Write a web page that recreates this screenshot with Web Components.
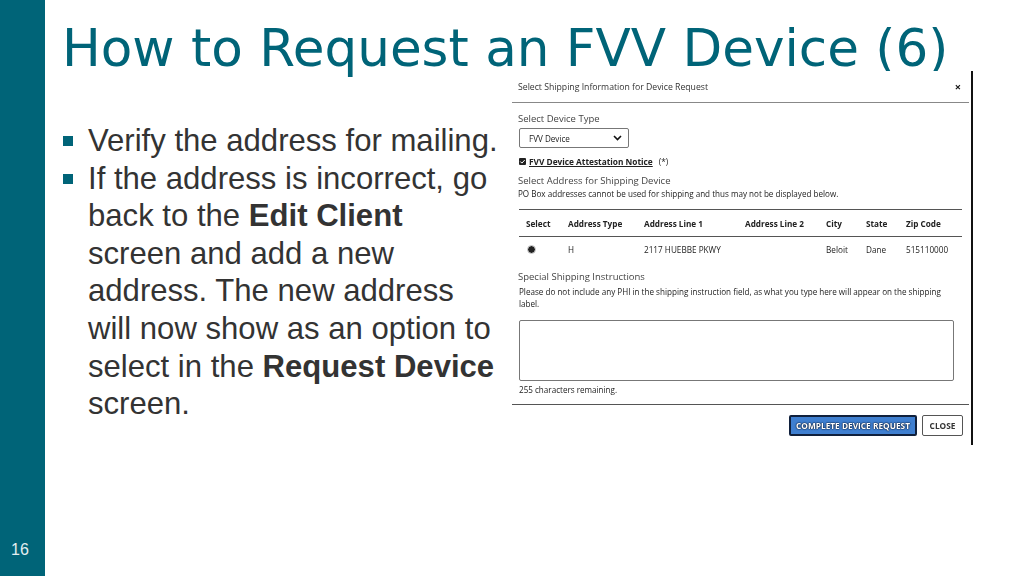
<!DOCTYPE html>
<html>
<head>
<meta charset="utf-8">
<title>How to Request an FVV Device (6)</title>
<style>
  html, body { margin: 0; padding: 0; background: #fff; }
</style>
</head>
<body>
<slide-frame number="16">
  <slide-title slot="title">How to Request an FVV Device (6)</slide-title>
  <bullet-list slot="body">
    <bullet-item>Verify the address for mailing.</bullet-item>
    <bullet-item>If the address is incorrect, go back to the <b>Edit Client</b> screen and add a new address. The new address will now show as an option to select in the <b>Request Device</b> screen.</bullet-item>
  </bullet-list>
  <device-dialog slot="aside"></device-dialog>
</slide-frame>

<script>
class SlideFrame extends HTMLElement {
    constructor() {
        super();
        const shadow = this.attachShadow({ mode: 'open' });
        shadow.innerHTML = /*html*/`
        <style>
            :host {
                display: flex;
                width: 1024px;
                height: 576px;
                overflow: hidden;
                background: #fff;
            }
            .side {
                width: 45px;
                flex: none;
                background: #006478;
                color: #e4eef0;
                display: flex;
                align-items: flex-end;
                font: 16px "Liberation Sans", Arial, sans-serif;
                padding: 0 0 17px 11px;
                box-sizing: border-box;
            }
            .main {
                flex: 1;
                display: flex;
                flex-direction: column;
                min-width: 0;
            }
            .content {
                display: flex;
                align-items: flex-start;
                margin-top: -5px;
            }
        </style>
        <div class="side">${this.getAttribute('number')}</div>
        <div class="main">
            <slot name="title"></slot>
            <div class="content">
                <slot name="body"></slot>
                <slot name="aside"></slot>
            </div>
        </div>
        `;
    }
}

class SlideTitle extends HTMLElement {
    constructor() {
        super();
        const shadow = this.attachShadow({ mode: 'open' });
        shadow.innerHTML = /*html*/`
        <style>
            :host {
                display: block;
                height: 76px;
                padding: 17px 0 0 17px;
                box-sizing: border-box;
                color: #006478;
                font: 51.6px/62px "DejaVu Sans", Verdana, sans-serif;
                white-space: nowrap;
            }
        </style>
        <slot></slot>
        `;
    }
}

class BulletList extends HTMLElement {
    constructor() {
        super();
        const shadow = this.attachShadow({ mode: 'open' });
        shadow.innerHTML = /*html*/`
        <style>
            :host {
                display: block;
                width: 467px;
                flex: none;
                padding: 51px 12px 0 18px;
                box-sizing: border-box;
            }
        </style>
        <slot></slot>
        `;
    }
}

class BulletItem extends HTMLElement {
    constructor() {
        super();
        const shadow = this.attachShadow({ mode: 'open' });
        shadow.innerHTML = /*html*/`
        <style>
            :host {
                display: flex;
                color: #333;
                font: 31.1px/37.6px "Liberation Sans", Arial, sans-serif;
            }
            .mark {
                width: 10px;
                height: 10px;
                flex: none;
                margin: 14px 15px 0 0;
                background: #006478;
            }
            .text { flex: 1; min-width: 0; }
        </style>
        <span class="mark"></span>
        <span class="text"><slot></slot></span>
        `;
    }
}

class AddressTable extends HTMLElement {
    constructor() {
        super();
        const shadow = this.attachShadow({ mode: 'open' });
        shadow.innerHTML = /*html*/`
        <style>
            :host {
                display: block;
                margin: 9px 0 0 7px;
                width: 443px;
                border-top: 1px solid #555;
                font-size: 8.2px;
                color: #222;
            }
            .row {
                display: grid;
                grid-template-columns: 42px 76px 101px 81px 40px 40px 1fr;
                align-items: center;
                padding-left: 7px;
            }
            .head {
                height: 26px;
                font-weight: 700;
                border-bottom: 1px solid #555;
            }
            .body { height: 26px; padding-bottom: 1px; box-sizing: border-box; }
            .radio {
                width: 7px;
                height: 7px;
                box-sizing: border-box;
                border-radius: 50%;
                margin-left: 2px;
                background: #222;
                outline: 1px solid #bbb;
                outline-offset: -0.5px;
            }
        </style>
        <div class="row head">
            <span>Select</span><span>Address Type</span><span>Address Line 1</span>
            <span>Address Line 2</span><span>City</span><span>State</span><span>Zip Code</span>
        </div>
        <div class="row body">
            <span class="radio"></span><span>H</span><span>2117 HUEBBE PKWY</span>
            <span></span><span>Beloit</span><span>Dane</span><span>515110000</span>
        </div>
        `;
    }
}

class DeviceDialog extends HTMLElement {
    constructor() {
        super();
        const shadow = this.attachShadow({ mode: 'open' });
        shadow.innerHTML = /*html*/`
        <style>
            :host {
                display: block;
                width: 461px;
                height: 374px;
                box-sizing: border-box;
                flex: none;
                background: #fff;
                border-right: 2px solid #111;
                font-family: "Open Sans", "Noto Sans", sans-serif;
                color: #222;
                filter: blur(0.3px);
            }
            .head {
                display: flex;
                justify-content: space-between;
                align-items: center;
                height: 31px;
                margin-right: 2px;
                padding: 0 8px 0 6px;
                border-bottom: 1px solid #888;
                font-size: 8.7px;
                color: #333;
            }
            .x { font-size: 11px; font-weight: 700; color: #111; }
            .label { font-size: 9.5px; line-height: 13px; color: #444; margin-left: 6px; }
            .note { font-size: 8.1px; line-height: 12px; color: #222; margin-left: 7px; }
            .select {
                display: flex;
                align-items: center;
                justify-content: space-between;
                box-sizing: border-box;
                width: 110px;
                height: 20px;
                margin: 3px 0 0 7px;
                padding: 0 6px 0 9px;
                border: 1px solid #777;
                border-radius: 2px;
                font-size: 8.1px;
            }
            .notice {
                display: flex;
                align-items: center;
                gap: 3px;
                margin: 6px 0 0 7px;
                height: 14px;
                font-size: 8.3px;
            }
            .check {
                width: 7px;
                height: 7px;
                background: #222;
                border-radius: 1px;
                display: flex;
            }
            .notice b { text-decoration: underline; }
            .notice i { font-style: normal; margin-left: 3px; }
            .area {
                box-sizing: border-box;
                width: 435px;
                height: 61px;
                margin: 10px 0 0 7px;
                border: 1px solid #777;
                border-radius: 2px;
            }
            .foot {
                display: flex;
                justify-content: flex-end;
                gap: 5px;
                margin: 8px 2px 0 0;
                padding: 10px 6px 0 0;
                border-top: 1px solid #555;
            }
            .btn {
                box-sizing: border-box;
                height: 21px;
                display: flex;
                align-items: center;
                justify-content: center;
                font-size: 8.3px;
                font-weight: 700;
                border-radius: 2px;
            }
            .primary {
                width: 128px;
                background: #3f7fd0;
                border: 2px solid #10203c;
                color: #fff;
                text-shadow: 0 0 1.5px #10203c, 0 0 1.5px #10203c, 0 0 1px #10203c;
            }
            .plain { width: 41px; border: 1px solid #555; color: #333; }
        </style>
        <div class="head">
            <span>Select Shipping Information for Device Request</span>
            <span class="x">×</span>
        </div>
        <div class="label" style="margin-top:9px">Select Device Type</div>
        <div class="select">
            <span>FVV Device</span>
            <svg width="9" height="6" viewBox="0 0 9 6"><path d="M1 1l3.5 3.5L8 1" fill="none" stroke="#111" stroke-width="1.6"/></svg>
        </div>
        <div class="notice">
            <span class="check"><svg width="7" height="7" viewBox="0 0 7 7"><path d="M1.3 3.5l1.6 1.6 2.8-3" fill="none" stroke="#fff" stroke-width="1"/></svg></span>
            <b>FVV Device Attestation Notice</b><i>(*)</i>
        </div>
        <div class="label" style="margin-top:6px">Select Address for Shipping Device</div>
        <div class="note" style="margin-top:1px;margin-left:6px">PO Box addresses cannot be used for shipping and thus may not be displayed below.</div>
        <address-table></address-table>
        <div class="label" style="margin-top:7px">Special Shipping Instructions</div>
        <div class="note" style="margin-top:3px;width:435px">Please do not include any PHI in the shipping instruction field, as what you type here will appear on the shipping label.</div>
        <div class="area"></div>
        <div class="note" style="margin-top:3px">255 characters remaining.</div>
        <div class="foot">
            <span class="btn primary">COMPLETE DEVICE REQUEST</span>
            <span class="btn plain">CLOSE</span>
        </div>
        `;
    }
}

customElements.define('slide-frame', SlideFrame);
customElements.define('slide-title', SlideTitle);
customElements.define('bullet-list', BulletList);
customElements.define('bullet-item', BulletItem);
customElements.define('address-table', AddressTable);
customElements.define('device-dialog', DeviceDialog);
</script>
</body>
</html>
